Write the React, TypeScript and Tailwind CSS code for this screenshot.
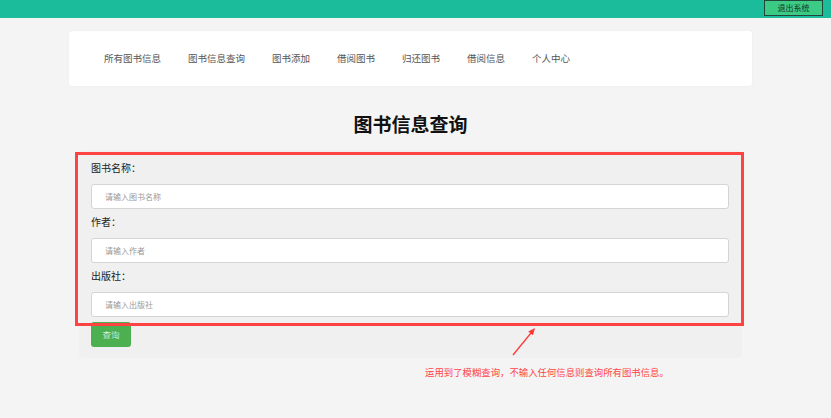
import React from "react";

const navItems = ["所有图书信息", "图书信息查询", "图书添加", "借阅图书", "归还图书", "借阅信息", "个人中心"];

const fields = [
  { label: "图书名称：", placeholder: "请输入图书名称" },
  { label: "作者：", placeholder: "请输入作者" },
  { label: "出版社：", placeholder: "请输入出版社" },
];

const FONT = "font-['Noto_Sans_CJK_SC','Microsoft_YaHei',sans-serif]";

export default function App() {
  return (
    <div className={`min-h-screen bg-[#f4f4f4] ${FONT}`}>
      {/* Top bar */}
      <header className="h-[18px] bg-[#1abc9c] flex justify-end items-start pr-[8px]">
        <button className="h-[16px] w-[59px] bg-[#3ccb85] border border-[#24463a] text-[8px] leading-none text-[#143326] flex items-center justify-center">
          退出系统
        </button>
      </header>

      <div className="ml-[69px] w-[683px]">
        {/* Nav card */}
        <nav className="mt-[13px] h-[55px] bg-white rounded-[3px] shadow-[0_0_2px_rgba(0,0,0,0.06)] flex items-center pl-[35px] gap-[27px]">
          {navItems.map((item) => (
            <span key={item} className="text-[9.5px] text-[#555] leading-none">
              {item}
            </span>
          ))}
        </nav>

        <h1 className="mt-[24px] h-[28px] text-center text-[19px] font-bold leading-[28px] text-[#111]">
          图书信息查询
        </h1>

        {/* Form panel */}
        <div className="relative mt-[12px] mx-[10px] bg-[#f0f0f0] rounded-[4px] pt-[11px] pb-[11px] pl-[12px] pr-[13px]">
          {fields.map((f, i) => (
            <div key={f.label} className={i === 0 ? "" : "mt-[6px]"}>
              <div className="h-[14px] leading-[14px] text-[10px] text-[#222]">{f.label}</div>
              <input
                readOnly
                placeholder={f.placeholder}
                className="mt-[9px] block w-full h-[25px] bg-white border border-[#d4d4d4] rounded-[3px] pl-[13px] text-[8px] text-[#333] placeholder:text-[#999] outline-none"
              />
            </div>
          ))}
          <button className="mt-[5px] w-[40px] h-[25px] bg-[#4caf50] rounded-[3px] text-white text-[8.5px] font-light leading-none flex items-center justify-center">
            查询
          </button>

          {/* Annotation box */}
          <div className="absolute left-[-4px] right-[-2px] top-[2px] bottom-[32px] border-[3px] border-[#ff4242] pointer-events-none" />

          {/* Annotation arrow */}
          <svg className="absolute left-[430px] top-[174px]" width="30" height="36" viewBox="0 0 30 36">
            <line x1="4" y1="31" x2="22" y2="9" stroke="#ff3838" strokeWidth="1.3" />
            <polygon points="26,4 23.9,11.3 19.25,7.53" fill="#ff3838" />
          </svg>
        </div>

        <p className="mt-[7px] pl-[356px] h-[14px] leading-[14px] text-[9.4px] text-[#ff4545] whitespace-nowrap">
          运用到了模糊查询，不输入任何信息则查询所有图书信息。
        </p>
      </div>
    </div>
  );
}
